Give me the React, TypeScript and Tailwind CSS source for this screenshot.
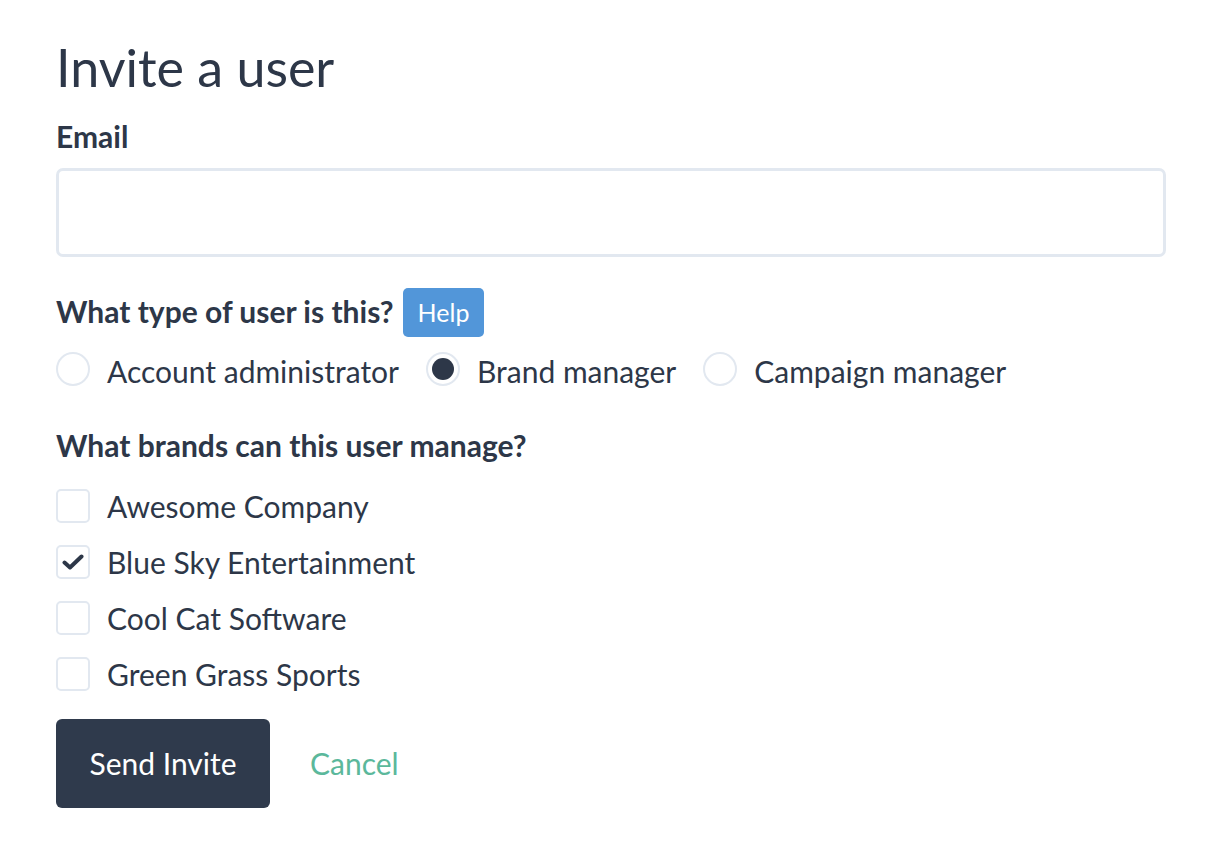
import { useState } from "react";

const brands = ["Awesome Company", "Blue Sky Entertainment", "Cool Cat Software", "Green Grass Sports"];
const roles = ["Account administrator", "Brand manager", "Campaign manager"];

function Radio({ checked }: { checked: boolean }) {
  return (
    <span className="flex h-[34px] w-[34px] shrink-0 items-center justify-center rounded-full border-2 border-[#e2e8f0] bg-white">
      {checked && <span className="h-[22px] w-[22px] rounded-full bg-[#2d3748]" />}
    </span>
  );
}

function Checkbox({ checked }: { checked: boolean }) {
  return (
    <span className="flex h-[34px] w-[34px] shrink-0 items-center justify-center rounded-[5px] border-2 border-[#e2e8f0] bg-white">
      {checked && (
        <svg width="22" height="16" viewBox="0 0 22 16" fill="none">
          <path d="M2.5 8.5 L8 13.5 L19.5 2.5" stroke="#2d3748" strokeWidth="4" strokeLinecap="round" strokeLinejoin="round" />
        </svg>
      )}
    </span>
  );
}

export default function App() {
  const [role, setRole] = useState("Brand manager");
  const [selected, setSelected] = useState<string[]>(["Blue Sky Entertainment"]);

  const toggle = (b: string) =>
    setSelected((s) => (s.includes(b) ? s.filter((x) => x !== b) : [...s, b]));

  return (
    <div
      className="min-h-[858px] bg-white px-[56px] pt-[36px] text-[#2d3748]"
      style={{ fontFamily: "Lato, 'Open Sans', sans-serif" }}
    >
      <h1 className="text-[52px] leading-[1.2] font-normal">Invite a user</h1>

      <label className="mt-[20px] block text-[30px] leading-[1.2] font-bold">Email</label>
      <input
        type="email"
        className="mt-[14px] block h-[89px] w-full rounded-[7px] border-[3px] border-[#e2e8f0] px-4 text-[30px] outline-none"
      />

      <div className="mt-[31px] flex items-center gap-[9px]">
        <span className="-mt-[4px] text-[30px] leading-[1.2] font-bold">What type of user is this?</span>
        <button className="h-[49px] rounded-[5px] bg-[#5296d9] px-[15px] text-[25px] text-white">Help</button>
      </div>

      <div className="mt-[14px] flex items-center gap-[27px]">
        {roles.map((r) => (
          <label key={r} className="flex cursor-pointer items-center gap-[17px]" onClick={() => setRole(r)}>
            <Radio checked={role === r} />
            <span className="translate-y-[2px] text-[30px] leading-[1.2]">{r}</span>
          </label>
        ))}
      </div>

      <div className="mt-[40px] text-[30px] leading-[1.2] font-bold">What brands can this user manage?</div>

      <div className="mt-[26px] flex flex-col gap-[22px]">
        {brands.map((b) => (
          <label key={b} className="flex h-[34px] cursor-pointer items-center gap-[17px]" onClick={() => toggle(b)}>
            <Checkbox checked={selected.includes(b)} />
            <span className="text-[30px] leading-[1.2]">{b}</span>
          </label>
        ))}
      </div>

      <div className="mt-[28px] flex items-center gap-[40px]">
        <button className="h-[89px] w-[214px] rounded-[6px] bg-[#2f3a4c] text-[30px] text-white">Send Invite</button>
        <a href="#" className="text-[30px] text-[#5bb89b]">Cancel</a>
      </div>
    </div>
  );
}
